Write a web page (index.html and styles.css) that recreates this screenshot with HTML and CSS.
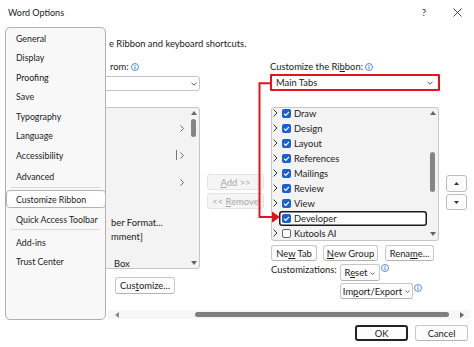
FILE: index.html
```html
<!DOCTYPE html>
<html>
<head>
<meta charset="utf-8">
<title>Word Options</title>
<link rel="stylesheet" href="styles.css">
</head>
<body>
<div class="dialog">
  <div class="titlebar">
    <span class="title">Word Options</span>
    <span class="tb-btn tb-help">?</span>
    <span class="tb-btn tb-close"><svg width="9" height="9" viewBox="0 0 9 9"><path d="M0.5 0.5L8.5 8.5M8.5 0.5L0.5 8.5" stroke="#333" stroke-width="0.9" fill="none"/></svg></span>
  </div>

  <div class="heading">e Ribbon and keyboard shortcuts.</div>

  <div class="main">
    <div class="col-left">
      <div class="label"><span class="lbl-left">rom:</span><svg class="info" width="8" height="8" viewBox="0 0 8 8"><circle cx="4" cy="4" r="3.5" fill="none" stroke="#2f6fd6" stroke-width="0.8"/><circle cx="4" cy="2.2" r="0.55" fill="#2f6fd6"/><path d="M4 3.4V6.1" stroke="#2f6fd6" stroke-width="0.9"/></svg></div>
      <div class="dropdown dd-left"><svg class="chev-down" width="6" height="4" viewBox="0 0 6 4"><polyline points="0.5,0.8 3,3.2 5.5,0.8" fill="none" stroke="#444" stroke-width="0.9"/></svg></div>
      <div class="list list-left">
        <div class="rows">
          <div class="lrow"></div>
          <div class="lrow"><svg class="chev" width="4" height="7" viewBox="0 0 4 7"><polyline points="0.5,0.5 3.5,3.5 0.5,6.5" fill="none" stroke="#555" stroke-width="0.9"/></svg></div>
          <div class="lrow"></div>
          <div class="lrow"><span class="split"></span><svg class="chev" width="4" height="7" viewBox="0 0 4 7"><polyline points="0.5,0.5 3.5,3.5 0.5,6.5" fill="none" stroke="#555" stroke-width="0.9"/></svg></div>
          <div class="lrow"></div>
          <div class="lrow"><svg class="chev" width="4" height="7" viewBox="0 0 4 7"><polyline points="0.5,0.5 3.5,3.5 0.5,6.5" fill="none" stroke="#555" stroke-width="0.9"/></svg></div>
          <div class="lrow"></div>
          <div class="lrow"></div>
          <div class="lrow"><span class="ltext">ber Format...</span></div>
          <div class="lrow"><span class="ltext">mment]</span></div>
          <div class="lrow"></div>
          <div class="lrow"><span class="ltext ltext-box">Box</span></div>
        </div>
        <div class="vscroll vs-left">
          <svg class="arr" width="6" height="4" viewBox="0 0 6 4"><polygon points="3,0 6,4 0,4" fill="#666"/></svg>
          <div class="thumb thumb-left"></div>
          <div class="spacer"></div>
          <svg class="arr arr-down" width="6" height="4" viewBox="0 0 6 4"><polygon points="0,0 6,0 3,4" fill="#666"/></svg>
        </div>
      </div>
      <button class="btn btn-customize"><span>Cus<u>t</u>omize...</span></button>
    </div>

    <div class="col-mid">
      <button class="btn disabled btn-add"><span><u>A</u>dd &gt;&gt;</span></button>
      <button class="btn disabled btn-remove"><span>&lt;&lt; <u>R</u>emove</span></button>
    </div>

    <div class="col-right">
      <div class="label"><span>Customize the Ri<u>b</u>bon:</span><svg class="info" width="8" height="8" viewBox="0 0 8 8"><circle cx="4" cy="4" r="3.5" fill="none" stroke="#2f6fd6" stroke-width="0.8"/><circle cx="4" cy="2.2" r="0.55" fill="#2f6fd6"/><path d="M4 3.4V6.1" stroke="#2f6fd6" stroke-width="0.9"/></svg></div>
      <div class="dropdown dd-right"><span>Main Tabs</span><svg class="chev-down" width="6" height="4" viewBox="0 0 6 4"><polyline points="0.5,0.8 3,3.2 5.5,0.8" fill="none" stroke="#444" stroke-width="0.9"/></svg></div>
      <div class="list list-right">
        <div class="rows rrows">
          <div class="rrow"><svg class="rchev" width="5" height="8" viewBox="0 0 5 8"><polyline points="0.6,0.6 4,4 0.6,7.4" fill="none" stroke="#333" stroke-width="1"/></svg><span class="item"><span class="cb on"><svg width="9" height="9" viewBox="0 0 9 9"><polyline points="2,4.6 3.8,6.3 7,2.8" fill="none" stroke="#fff" stroke-width="1.2"/></svg></span><span>Draw</span></span></div>
          <div class="rrow"><svg class="rchev" width="5" height="8" viewBox="0 0 5 8"><polyline points="0.6,0.6 4,4 0.6,7.4" fill="none" stroke="#333" stroke-width="1"/></svg><span class="item"><span class="cb on"><svg width="9" height="9" viewBox="0 0 9 9"><polyline points="2,4.6 3.8,6.3 7,2.8" fill="none" stroke="#fff" stroke-width="1.2"/></svg></span><span>Design</span></span></div>
          <div class="rrow"><svg class="rchev" width="5" height="8" viewBox="0 0 5 8"><polyline points="0.6,0.6 4,4 0.6,7.4" fill="none" stroke="#333" stroke-width="1"/></svg><span class="item"><span class="cb on"><svg width="9" height="9" viewBox="0 0 9 9"><polyline points="2,4.6 3.8,6.3 7,2.8" fill="none" stroke="#fff" stroke-width="1.2"/></svg></span><span>Layout</span></span></div>
          <div class="rrow"><svg class="rchev" width="5" height="8" viewBox="0 0 5 8"><polyline points="0.6,0.6 4,4 0.6,7.4" fill="none" stroke="#333" stroke-width="1"/></svg><span class="item"><span class="cb on"><svg width="9" height="9" viewBox="0 0 9 9"><polyline points="2,4.6 3.8,6.3 7,2.8" fill="none" stroke="#fff" stroke-width="1.2"/></svg></span><span>References</span></span></div>
          <div class="rrow"><svg class="rchev" width="5" height="8" viewBox="0 0 5 8"><polyline points="0.6,0.6 4,4 0.6,7.4" fill="none" stroke="#333" stroke-width="1"/></svg><span class="item"><span class="cb on"><svg width="9" height="9" viewBox="0 0 9 9"><polyline points="2,4.6 3.8,6.3 7,2.8" fill="none" stroke="#fff" stroke-width="1.2"/></svg></span><span>Mailings</span></span></div>
          <div class="rrow"><svg class="rchev" width="5" height="8" viewBox="0 0 5 8"><polyline points="0.6,0.6 4,4 0.6,7.4" fill="none" stroke="#333" stroke-width="1"/></svg><span class="item"><span class="cb on"><svg width="9" height="9" viewBox="0 0 9 9"><polyline points="2,4.6 3.8,6.3 7,2.8" fill="none" stroke="#fff" stroke-width="1.2"/></svg></span><span>Review</span></span></div>
          <div class="rrow"><svg class="rchev" width="5" height="8" viewBox="0 0 5 8"><polyline points="0.6,0.6 4,4 0.6,7.4" fill="none" stroke="#333" stroke-width="1"/></svg><span class="item"><span class="cb on"><svg width="9" height="9" viewBox="0 0 9 9"><polyline points="2,4.6 3.8,6.3 7,2.8" fill="none" stroke="#fff" stroke-width="1.2"/></svg></span><span>View</span></span></div>
          <div class="rrow"><svg class="rchev" width="5" height="8" viewBox="0 0 5 8"><polyline points="0.6,0.6 4,4 0.6,7.4" fill="none" stroke="#333" stroke-width="1"/></svg><span class="item focus"><span class="cb on"><svg width="9" height="9" viewBox="0 0 9 9"><polyline points="2,4.6 3.8,6.3 7,2.8" fill="none" stroke="#fff" stroke-width="1.2"/></svg></span><span>Developer</span></span></div>
          <div class="rrow"><svg class="rchev" width="5" height="8" viewBox="0 0 5 8"><polyline points="0.6,0.6 4,4 0.6,7.4" fill="none" stroke="#333" stroke-width="1"/></svg><span class="item"><span class="cb off"></span><span>Kutools AI</span></span></div>
        </div>
        <div class="vscroll vs-right">
          <svg class="arr" width="6" height="4" viewBox="0 0 6 4"><polygon points="3,0 6,4 0,4" fill="#666"/></svg>
          <div class="thumb thumb-right"></div>
          <div class="spacer"></div>
          <svg class="arr arr-down-r" width="6" height="4" viewBox="0 0 6 4"><polygon points="0,0 6,0 3,4" fill="#666"/></svg>
        </div>
      </div>
      <div class="btn-row">
        <button class="btn btn-newtab"><span>Ne<u>w</u> Tab</span></button>
        <button class="btn btn-newgroup"><span><u>N</u>ew Group</span></button>
        <button class="btn btn-rename"><span>Rena<u>m</u>e...</span></button>
      </div>
      <div class="cust-row">
        <span class="cust-label">Customizations:</span>
        <button class="btn btn-reset"><span>R<u>e</u>set</span><svg class="chev-down small" width="5" height="3" viewBox="0 0 5 3"><polyline points="0.5,0.5 2.5,2.5 4.5,0.5" fill="none" stroke="#444" stroke-width="0.8"/></svg></button>
        <svg class="info info-reset" width="8" height="8" viewBox="0 0 8 8"><circle cx="4" cy="4" r="3.5" fill="none" stroke="#2f6fd6" stroke-width="0.8"/><circle cx="4" cy="2.2" r="0.55" fill="#2f6fd6"/><path d="M4 3.4V6.1" stroke="#2f6fd6" stroke-width="0.9"/></svg>
      </div>
      <div class="imp-row">
        <button class="btn btn-import"><span>Im<u>p</u>ort/Export</span><svg class="chev-down small" width="5" height="3" viewBox="0 0 5 3"><polyline points="0.5,0.5 2.5,2.5 4.5,0.5" fill="none" stroke="#444" stroke-width="0.8"/></svg></button>
        <svg class="info info-import" width="8" height="8" viewBox="0 0 8 8"><circle cx="4" cy="4" r="3.5" fill="none" stroke="#2f6fd6" stroke-width="0.8"/><circle cx="4" cy="2.2" r="0.55" fill="#2f6fd6"/><path d="M4 3.4V6.1" stroke="#2f6fd6" stroke-width="0.9"/></svg>
      </div>
    </div>

    <div class="col-updown">
      <button class="btn btn-arrow btn-up"><svg width="5" height="3" viewBox="0 0 5 3"><polygon points="2.5,0 5,3 0,3" fill="#333"/></svg></button>
      <button class="btn btn-arrow btn-down"><svg width="5" height="3" viewBox="0 0 5 3"><polygon points="0,0 5,0 2.5,3" fill="#333"/></svg></button>
    </div>
  </div>

  <div class="hscroll">
    <svg class="harr harr-left" width="4" height="6" viewBox="0 0 4 6"><polygon points="4,0 4,6 0,3" fill="#8a8a8a"/></svg>
    <div class="hthumb"></div>
    <svg class="harr harr-right" width="4" height="6" viewBox="0 0 4 6"><polygon points="0,0 4,3 0,6" fill="#666"/></svg>
  </div>

  <div class="footer">
    <button class="btn btn-ok"><span>OK</span></button>
    <button class="btn btn-cancel"><span>Cancel</span></button>
  </div>

  <nav class="nav">
    <div class="nav-item">General</div>
    <div class="nav-item">Display</div>
    <div class="nav-item">Proofing</div>
    <div class="nav-item">Save</div>
    <div class="nav-item">Typography</div>
    <div class="nav-item">Language</div>
    <div class="nav-item">Accessibility</div>
    <div class="nav-item nav-advanced">Advanced</div>
    <div class="nav-sep"></div>
    <div class="nav-item nav-selected">Customize Ribbon</div>
    <div class="nav-item nav-qat">Quick Access Toolbar</div>
    <div class="nav-sep"></div>
    <div class="nav-item nav-addins">Add-ins</div>
    <div class="nav-item">Trust Center</div>
  </nav>

  <svg class="annot" width="474" height="347" viewBox="0 0 474 347">
    <path d="M270.5 83.3H259.5V217H273" fill="none" stroke="#e3141c" stroke-width="2"/>
    <polygon points="272,211.5 280,217 272,222.5" fill="#e3141c"/>
  </svg>
</div>
</body>
</html>
```

FILE: styles.css
```css
* {
  box-sizing: border-box;
  margin: 0;
  padding: 0;
}

html, body {
  width: 474px;
  height: 347px;
  overflow: hidden;
  background: #ffffff;
}

body {
  font-family: Lato, "Liberation Sans", sans-serif;
  font-size: 9.4px;
  color: #1b1b1b;
}

.dialog {
  position: relative;
  width: 474px;
  height: 347px;
  background: #ffffff;
}

u {
  text-decoration: underline;
  text-underline-offset: 1px;
}

/* title bar */
.titlebar {
  height: 24px;
  display: flex;
  align-items: center;
  padding-left: 8px;
  padding-right: 7px;
}

.title {
  flex: 1;
  font-size: 9px;
  color: #1b1b1b;
}

.tb-btn {
  width: 20px;
  height: 20px;
  display: flex;
  align-items: center;
  justify-content: center;
  color: #333;
}

.tb-help {
  font-size: 10px;
  margin-right: 13px;
}

/* heading */
.heading {
  margin-top: 14px;
  height: 12px;
  line-height: 12px;
  padding-left: 109px;
}

/* main area */
.main {
  margin-top: 11px;
  height: 249px;
  display: flex;
  padding-left: 96px;
}

.col-left {
  width: 104px;
  display: flex;
  flex-direction: column;
}

.col-mid {
  width: 57px;
  margin-left: 7px;
  display: flex;
  flex-direction: column;
}

.col-right {
  width: 170px;
  margin-left: 6px;
  display: flex;
  flex-direction: column;
}

.col-updown {
  width: 21px;
  margin-left: 6px;
  display: flex;
  flex-direction: column;
}

.label {
  height: 12px;
  line-height: 12px;
  display: flex;
  align-items: center;
  white-space: nowrap;
}

.lbl-left {
  padding-left: 14px;
}

.info {
  display: block;
  margin-left: 2px;
  flex: none;
}

.dropdown {
  display: flex;
  align-items: center;
  justify-content: space-between;
  background: #fff;
  border: 1px solid #c4c4c4;
  border-radius: 3px;
}

.dd-left {
  margin-top: 3px;
  height: 15px;
  justify-content: flex-end;
  padding-right: 2px;
}

.dd-right {
  margin-top: 1px;
  height: 17px;
  border: 2px solid #e3141c;
  border-radius: 1px;
  padding-left: 4px;
  padding-right: 5px;
}

.chev-down {
  display: block;
  flex: none;
}

/* lists */
.list {
  margin-top: 16px;
  display: flex;
  background: #f3f3f3;
  border: 1px solid #c6c6c6;
  border-radius: 3px;
  overflow: hidden;
}

.list-left {
  height: 162px;
}

.list-right {
  height: 134px;
  margin-left: 1px;
  width: 168px;
}

.rows {
  flex: 1;
  display: flex;
  flex-direction: column;
  min-width: 0;
}

.lrow {
  height: 13.5px;
  flex: none;
  display: flex;
  align-items: center;
  justify-content: flex-end;
  padding-right: 4px;
  position: relative;
}

.ltext {
  position: absolute;
  left: 14px;
  white-space: nowrap;
}

.ltext-box {
  left: 17px;
}

.split {
  width: 1px;
  height: 10px;
  background: #777;
  margin-right: 3px;
}

.chev {
  display: block;
}

.rrows {
  margin-top: -2.5px;
}

.rrow {
  height: 15px;
  flex: none;
  display: flex;
  align-items: center;
}

.rchev {
  display: block;
  margin-left: 1px;
  margin-right: 1px;
  flex: none;
}

.item {
  height: 15px;
  flex: 1;
  display: flex;
  align-items: center;
  padding-left: 3px;
  white-space: nowrap;
  border-radius: 3px;
}

.item.focus {
  background: #ffffff;
  box-shadow: inset 0 0 0 1.5px #1b1b1b;
}

.cb {
  width: 9px;
  height: 9px;
  border-radius: 2px;
  margin-right: 3px;
  flex: none;
  display: flex;
}

.cb.on {
  background: #1a5fd2;
}

.cb.off {
  background: #fff;
  border: 1px solid #666;
}

.vscroll {
  width: 11px;
  flex: none;
  display: flex;
  flex-direction: column;
  align-items: center;
}

.arr {
  display: block;
  margin-top: 3px;
  flex: none;
}

.arr-down {
  margin-top: 0;
  margin-bottom: 3px;
}

.arr-down-r {
  margin-top: 0;
  margin-bottom: 4px;
}

.thumb {
  width: 5px;
  border-radius: 3px;
  background: #858585;
  flex: none;
}

.thumb-left {
  margin-top: 4px;
  height: 18px;
}

.thumb-right {
  margin-top: 37px;
  height: 40px;
}

.spacer {
  flex: 1;
}

/* buttons */
.btn {
  font-family: inherit;
  font-size: 9.4px;
  color: #1b1b1b;
  background: #fdfdfd;
  border: 1px solid #c8c8c8;
  border-bottom-color: #b4b4b4;
  border-radius: 3px;
  display: flex;
  align-items: center;
  justify-content: center;
  white-space: nowrap;
  flex: none;
}

.btn.disabled {
  background: #f5f5f5;
  border-color: #e4e4e4;
  color: #a8a8a8;
}

.btn-customize {
  margin-top: 8px;
  margin-left: 19px;
  width: 60px;
  height: 17px;
}

.btn-add {
  margin-top: 113px;
  height: 16px;
}

.btn-remove {
  margin-top: 3px;
  height: 16px;
}

.btn-row {
  margin-top: 4px;
  display: flex;
  padding-left: 1px;
}

.btn-newtab {
  width: 46px;
  height: 16px;
}

.btn-newgroup {
  width: 55px;
  height: 16px;
  margin-left: 6px;
}

.btn-rename {
  width: 49px;
  height: 16px;
  margin-left: 7px;
}

.cust-row {
  margin-top: 3px;
  height: 17px;
  display: flex;
  align-items: center;
  padding-left: 1px;
}

.cust-label {
  width: 69px;
  white-space: nowrap;
  align-self: flex-start;
  line-height: 12px;
}

.btn-reset {
  width: 40px;
  height: 17px;
  gap: 3px;
}

.small {
  margin-top: 1px;
}

.info-reset {
  align-self: flex-start;
  margin-left: 1px;
}

.imp-row {
  margin-top: 2px;
  height: 16px;
  display: flex;
  padding-left: 70px;
}

.btn-import {
  width: 73px;
  height: 16px;
  gap: 3px;
}

.info-import {
  margin-top: 1px;
  margin-left: 1px;
}

.btn-arrow {
  width: 21px;
  border-color: #bdbdbd;
}

.btn-up {
  margin-top: 114px;
  height: 17px;
}

.btn-down {
  margin-top: 2px;
  height: 16px;
}

.btn-arrow svg {
  display: block;
}

/* horizontal scrollbar */
.hscroll {
  margin-left: 108px;
  width: 362px;
  height: 9px;
  background: #f6f6f6;
  display: flex;
  align-items: center;
}

.harr {
  display: block;
  flex: none;
}

.harr-left {
  margin-left: 7px;
}

.hthumb {
  margin-left: 76px;
  width: 254px;
  height: 5px;
  border-radius: 3px;
  background: #7f7f7f;
  flex: none;
}

.harr-right {
  margin-left: 11px;
}

/* footer */
.footer {
  margin-top: 6px;
  display: flex;
  justify-content: flex-end;
  padding-right: 6px;
}

.btn-ok {
  width: 53px;
  height: 16px;
  border: 2px solid #222;
}

.btn-cancel {
  width: 53px;
  height: 16px;
  margin-left: 7px;
}

/* floating navigation panel */
.nav {
  position: absolute;
  left: 5px;
  top: 27px;
  width: 101px;
  height: 293px;
  background: #f8f8f8;
  border: 1px solid #b0b0b0;
  border-radius: 5px;
  display: flex;
  flex-direction: column;
  font-size: 8.8px;
  padding-top: 0.5px;
}

.nav-item {
  height: 19.5px;
  flex: none;
  display: flex;
  align-items: center;
  padding-left: 10px;
  white-space: nowrap;
}

.nav-advanced {
  height: 22px;
}

.nav-sep {
  height: 1px;
  background: #dadada;
  margin: 0 5px;
  flex: none;
}

.nav-selected {
  margin-top: 2px;
  height: 18px;
  margin-left: 0;
  margin-right: -1px;
  padding-left: 9px;
  background: #ffffff;
  border: 1px solid #b3b3b3;
  border-radius: 4px;
}

.nav-qat {
  height: 20px;
  margin-top: 1px;
}

.nav-addins {
  margin-top: 2px;
  height: 20px;
}

/* red annotation */
.annot {
  position: absolute;
  left: 0;
  top: 0;
  pointer-events: none;
}
```
